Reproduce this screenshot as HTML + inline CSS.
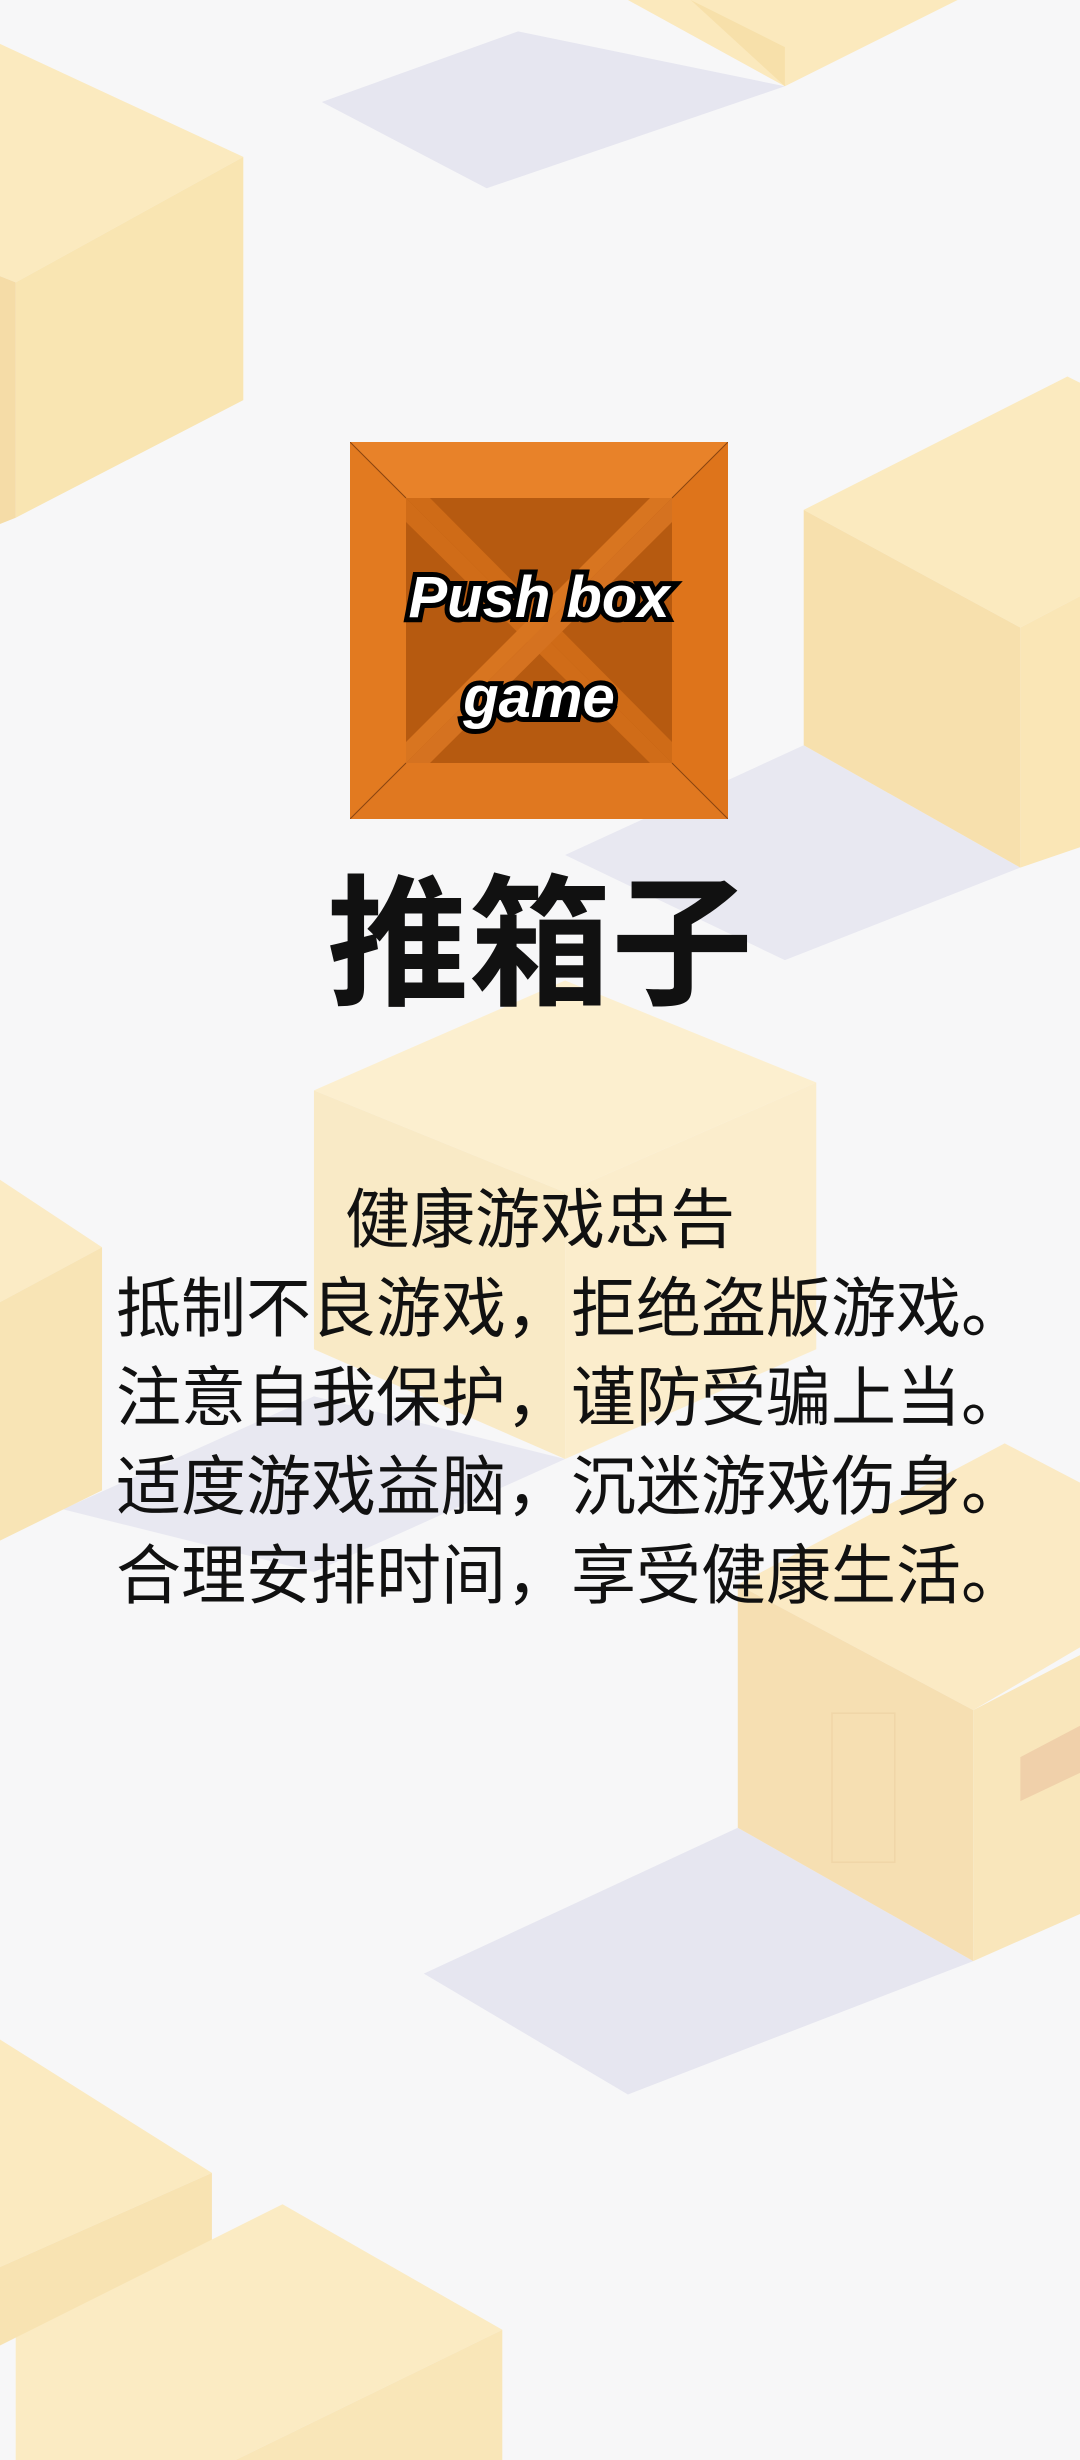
<!DOCTYPE html>
<html><head><meta charset="utf-8"><style>
html,body{margin:0;padding:0;width:1080px;height:2460px;overflow:hidden;background:#f7f7f8;}
#bg{position:absolute;left:0;top:0;width:1080px;height:2460px;}
.t{position:absolute;left:0;width:1080px;text-align:center;font-family:"Liberation Sans","Noto Sans CJK SC",sans-serif;color:#111;}
</style></head><body>
<svg id="bg" viewBox="0 0 688 1568" preserveAspectRatio="none">
<rect width="688" height="1568" fill="#f7f7f8"/>
<polygon points="205,65 330,20 500,55 310,120" fill="#e6e6f0"/>
<polygon points="360,545 512,475 650,553 500,612" fill="#e8e8f1"/>
<polygon points="40,962 200,890 360,930 200,1002" fill="#e8e8f1"/>
<polygon points="270,1258 470,1165 620,1250 400,1335" fill="#e6e6f0"/>
<polygon points="400,0 610,0 500,55" fill="#fbe9bd"/>
<polygon points="440,0 500,55 500,30" fill="#f7e0aa"/>
<polygon points="0,28 155,100 10,180 0,176" fill="#fbeabf"/>
<polygon points="10,180 155,100 155,255 10,330" fill="#f9e5b2"/>
<polygon points="0,176 10,180 10,330 0,334" fill="#f5dca7"/>
<polygon points="512,325 680,240 688,244 688,380 650,400" fill="#fbeabf"/>
<polygon points="512,325 650,400 650,553 512,475" fill="#f7e0ad"/>
<polygon points="650,400 688,380 688,540 650,553" fill="#fae6b6"/>
<polygon points="200,695 360,625 520,690 360,760" fill="#fcefcf"/>
<polygon points="200,695 360,760 360,930 200,860" fill="#f9eac6"/>
<polygon points="360,760 520,690 520,860 360,930" fill="#fbedcc"/>
<polygon points="0,752 65,795 0,830" fill="#fbebc5"/>
<polygon points="0,830 65,795 65,950 0,982" fill="#f8e4b5"/>
<polygon points="470,1010 640,920 688,945 688,1050 620,1090" fill="#fbeac4"/>
<polygon points="470,1010 620,1090 620,1250 470,1165" fill="#f6dfb2"/>
<polygon points="620,1090 688,1055 688,1220 620,1250" fill="#f9e6bb"/>
<polygon points="650,1120 688,1100 688,1130 650,1148" fill="#f0d0aa"/>
<rect x="530" y="1092" width="40" height="95" fill="none" stroke="#f0d6a8" stroke-width="1"/>
<polygon points="0,1300 135,1385 0,1445" fill="#fbeac0"/>
<polygon points="0,1445 135,1385 135,1480 10,1490 0,1495" fill="#f8e3b2"/>
<polygon points="10,1490 180,1405 320,1485 150,1568 10,1568" fill="#fbebc3"/>
<polygon points="150,1568 320,1485 320,1568" fill="#f9e6b8"/>
</svg>

<svg style="position:absolute;left:350px;top:442px" width="378" height="377" viewBox="0 0 378 377">
<rect width="378" height="377" fill="#e57d22"/>
<polygon points="0,0 378,0 322,56 56,56" fill="#e88229"/>
<polygon points="0,0 56,56 56,321 0,377" fill="#e27a20"/>
<polygon points="378,0 378,377 322,321 322,56" fill="#de741b"/>
<polygon points="0,377 56,321 322,321 378,377" fill="#e07820"/>
<rect x="56" y="56" width="266" height="265" fill="#b65a10"/>
<polygon points="56,56 322,321 300,321 56,80" fill="#d06c18"/>
<polygon points="56,56 80,56 322,300 322,321" fill="#cf6b17"/>
<polygon points="322,56 56,321 56,300 300,56" fill="#d87520"/>
<polygon points="322,56 322,80 80,321 56,321" fill="#d57220"/>
<g stroke="#8a4510" stroke-width="1" fill="none"><line x1="0" y1="0" x2="56" y2="56"/><line x1="378" y1="0" x2="322" y2="56"/><line x1="0" y1="377" x2="56" y2="321"/><line x1="378" y1="377" x2="322" y2="321"/></g>
<text x="189" y="175" text-anchor="middle" font-family="Liberation Sans,sans-serif" font-weight="bold" font-style="italic" font-size="58" fill="#fff" stroke="#000" stroke-width="10" paint-order="stroke">Push box</text>
<text x="189" y="275" text-anchor="middle" font-family="Liberation Sans,sans-serif" font-weight="bold" font-style="italic" font-size="58" fill="#fff" stroke="#000" stroke-width="10" paint-order="stroke">game</text>
</svg>

<div class="t" style="top:866px;font-size:142px;font-weight:bold;line-height:160px;">推箱子</div>
<div class="t" style="top:1175px;font-size:65px;line-height:89px;">健康游戏忠告</div>
<div class="t" style="top:1264px;left:31px;font-size:65px;line-height:89px;">抵制不良游戏，拒绝盗版游戏。<br>注意自我保护，谨防受骗上当。<br>适度游戏益脑，沉迷游戏伤身。<br>合理安排时间，享受健康生活。</div>
</body></html>
